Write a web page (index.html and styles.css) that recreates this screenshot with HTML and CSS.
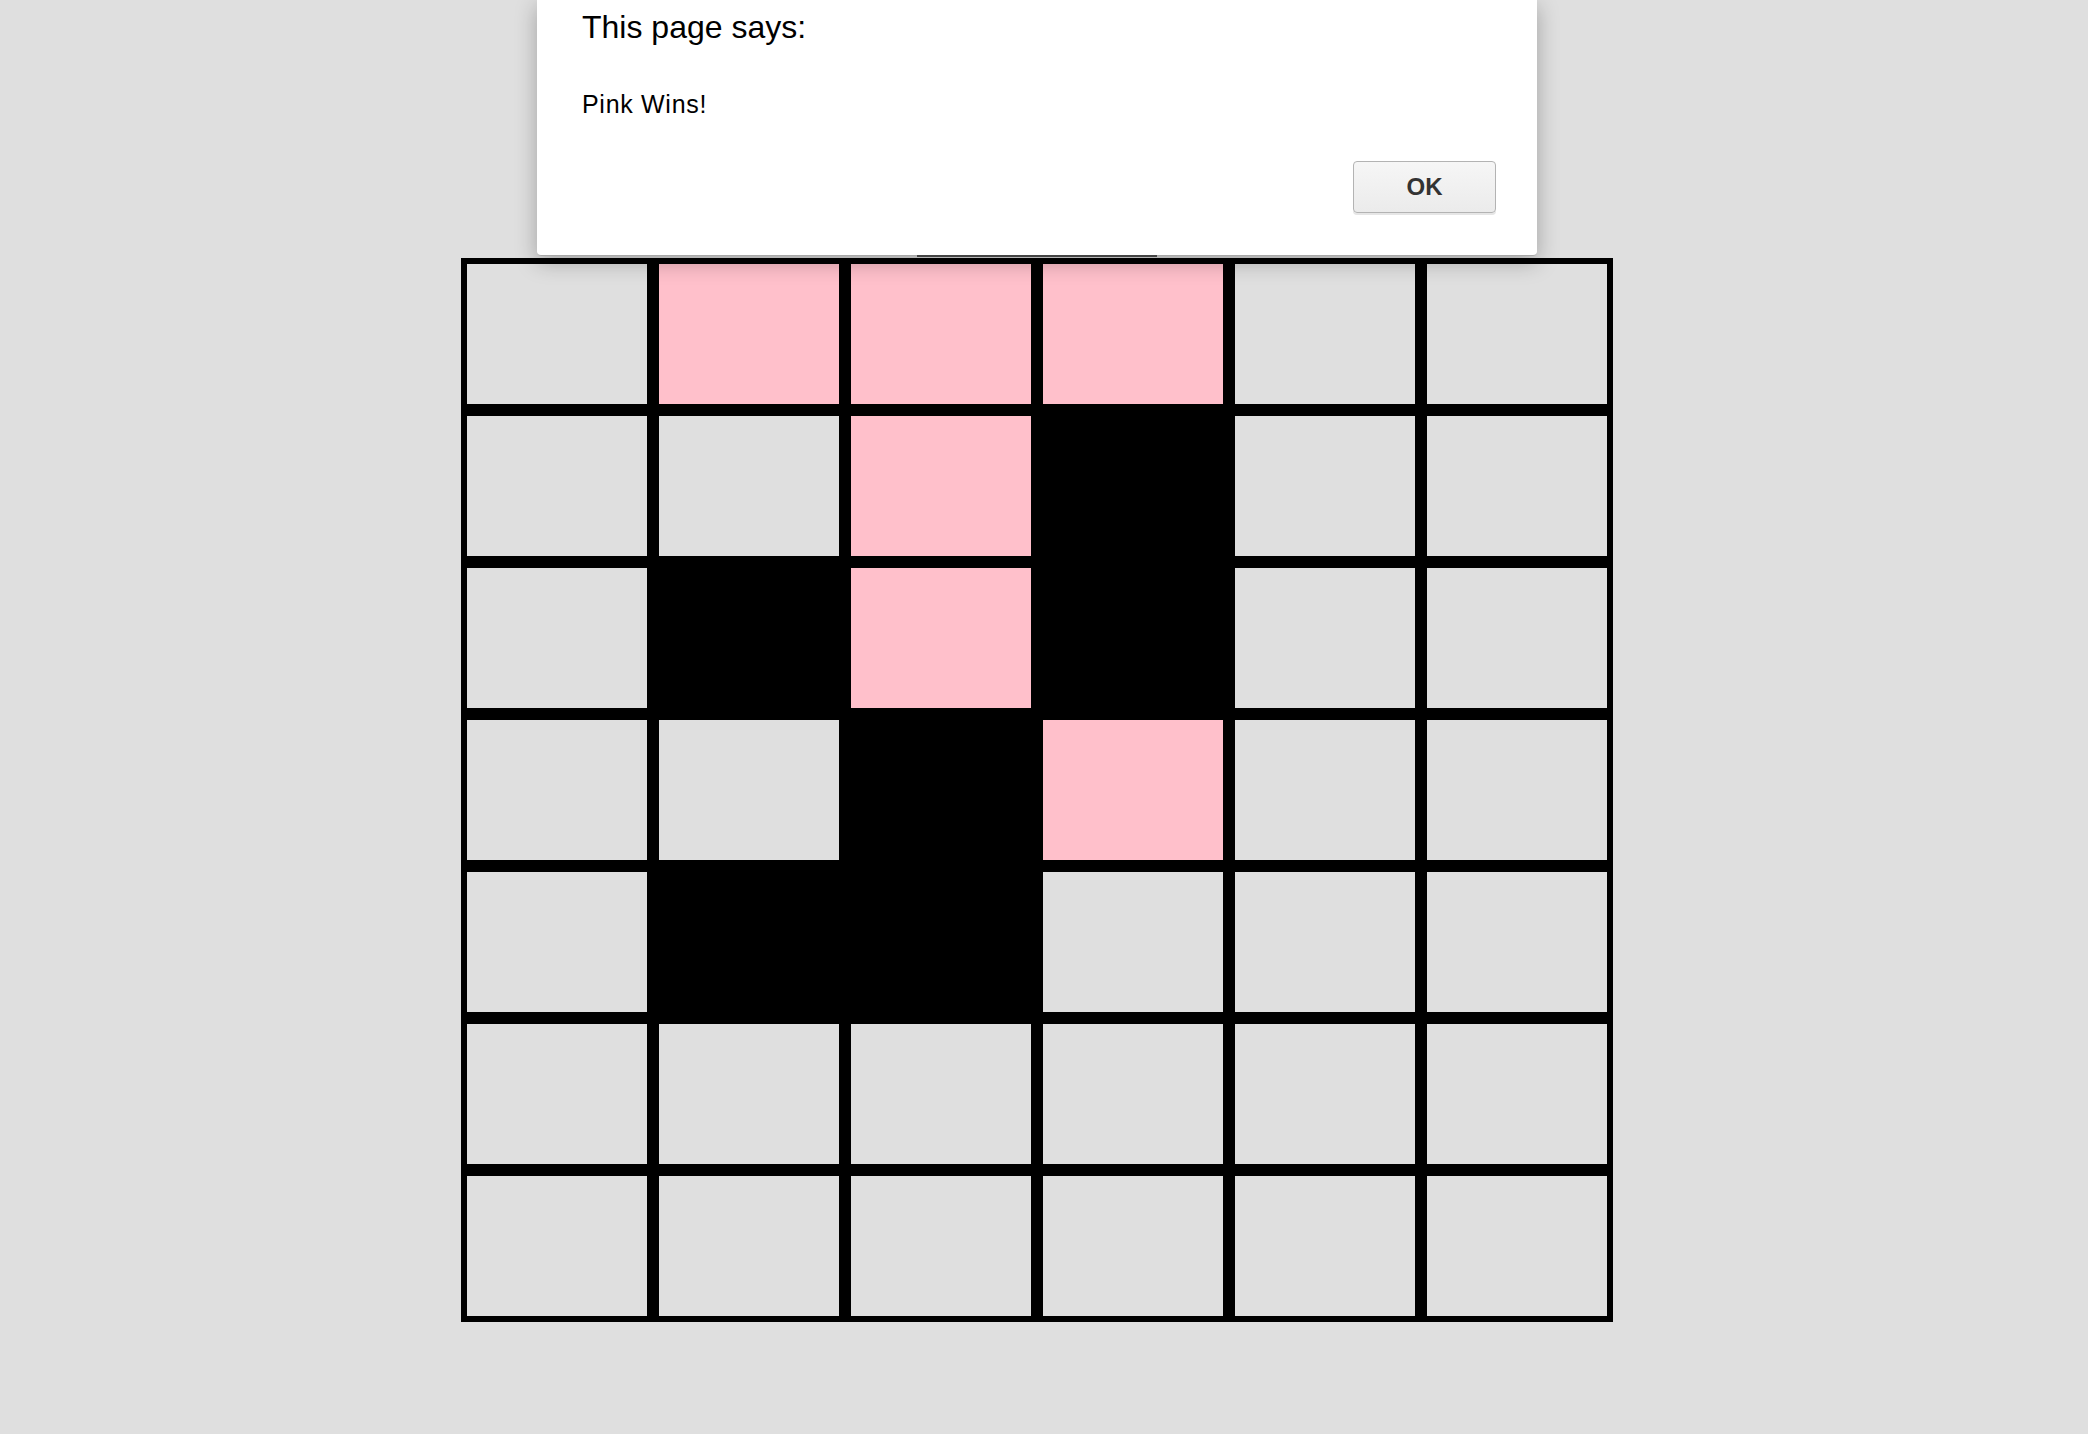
FILE: index.html
```html
<!DOCTYPE html>
<html>
<head>
<meta charset="utf-8">
<title>Connect</title>
<link rel="stylesheet" href="styles.css">
</head>
<body>
<div class="stage">
  <div class="board">
    <div class="cell"></div><div class="cell pink"></div><div class="cell pink"></div><div class="cell pink"></div><div class="cell"></div><div class="cell"></div>
    <div class="cell"></div><div class="cell"></div><div class="cell pink"></div><div class="cell black"></div><div class="cell"></div><div class="cell"></div>
    <div class="cell"></div><div class="cell black"></div><div class="cell pink"></div><div class="cell black"></div><div class="cell"></div><div class="cell"></div>
    <div class="cell"></div><div class="cell"></div><div class="cell black"></div><div class="cell pink"></div><div class="cell"></div><div class="cell"></div>
    <div class="cell"></div><div class="cell black"></div><div class="cell black"></div><div class="cell"></div><div class="cell"></div><div class="cell"></div>
    <div class="cell"></div><div class="cell"></div><div class="cell"></div><div class="cell"></div><div class="cell"></div><div class="cell"></div>
    <div class="cell"></div><div class="cell"></div><div class="cell"></div><div class="cell"></div><div class="cell"></div><div class="cell"></div>
  </div>
  <div class="dialog">
    <p class="dialog-title">This page says:</p>
    <p class="dialog-msg">Pink Wins!</p>
    <div class="dialog-actions">
      <button class="ok-btn">OK</button>
    </div>
  </div>
</div>
</body>
</html>
```
FILE: styles.css
```css
html, body {
  margin: 0;
  padding: 0;
  background: #dfdfdf;
}
body {
  font-family: "Liberation Sans", Arial, sans-serif;
}
.stage {
  position: relative;
  width: 2074px;
  padding-top: 258px;
}
.board {
  display: grid;
  grid-template-columns: repeat(6, 192px);
  width: 1152px;
  margin: 0 auto;
}
.cell {
  width: 180px;
  height: 140px;
  border: 6px solid #000;
  background: #dfdfdf;
}
.cell.pink { background: #ffc0cb; }
.cell.black { background: #000; }

.dialog {
  position: absolute;
  top: 0;
  left: 537px;
  width: 1000px;
  height: 256px;
  box-sizing: border-box;
  padding: 11px 41px 0 45px;
  background: #fff;
  border-bottom: 1px solid #a8a8a8;
  border-radius: 0 0 4px 4px;
  box-shadow: 0 6px 22px rgba(0,0,0,0.28);
}
.dialog::after {
  content: "";
  position: absolute;
  left: 380px;
  width: 240px;
  bottom: -2px;
  height: 2px;
  background: #444;
}
.dialog-title {
  margin: 0;
  font-size: 32px;
  line-height: 1;
  color: #000;
}
.dialog-msg {
  margin: 49px 0 0;
  font-size: 25px;
  line-height: 1;
  letter-spacing: 0.7px;
  color: #000;
}
.dialog-actions {
  display: flex;
  justify-content: flex-end;
  margin-top: 44px;
}
.ok-btn {
  width: 143px;
  height: 52px;
  border: 1px solid #b3b3b3;
  border-radius: 4px;
  background: linear-gradient(#f6f6f6, #ebebeb);
  box-shadow: 0 2px 0 #e6e6e6;
  font-family: "Liberation Sans", Arial, sans-serif;
  font-weight: bold;
  font-size: 24px;
  color: #333;
  padding: 0;
}
```
